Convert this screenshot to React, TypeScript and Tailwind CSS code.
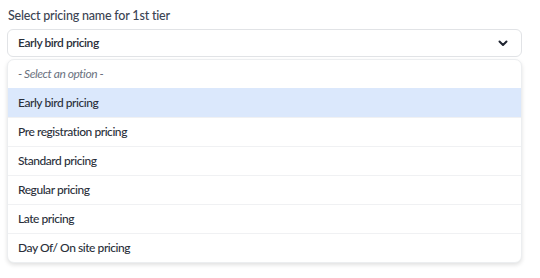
import React from 'react';

const options = [
  'Early bird pricing',
  'Pre registration pricing',
  'Standard pricing',
  'Regular pricing',
  'Late pricing',
  'Day Of/ On site pricing',
];

export default function App() {
  const selected = 'Early bird pricing';

  return (
    <div className="w-[540px] h-[278px] bg-white font-['Lato',sans-serif] text-[12px] font-medium tracking-[-0.45px] text-[#2a2f3a]">
      <div className="pl-[7px] pr-[18px] pt-[7px]">
        {/* Label */}
        <label className="block pl-px text-[12.5px] tracking-[-0.2px] font-medium text-[#3b4453] leading-[18px]">
          Select pricing name for 1st tier
        </label>

        {/* Select box */}
        <div className="mt-[4px] h-[28px] flex items-center justify-between rounded-[6px] border border-[#e1e3e6] bg-white pl-[10px] pr-[13px]">
          <span className="font-semibold text-[#2a2f3a]">{selected}</span>
          <svg width="10" height="7" viewBox="0 0 10 7" fill="none">
            <path d="M1.5 1.5 5 5 8.5 1.5" stroke="#1f2430" strokeWidth="2" strokeLinecap="round" strokeLinejoin="round" />
          </svg>
        </div>

        {/* Dropdown list */}
        <div className="mt-[2px] rounded-[7px] border border-[#eceef0] bg-white shadow-[0_2px_4px_rgba(0,0,0,0.12)] overflow-hidden">
          <div className="h-[28px] flex items-center pl-[10px] italic font-normal text-[#6b7280]">- Select an option -</div>
          {options.map((o) => (
            <div
              key={o}
              className={
                o === selected
                  ? 'h-[29px] flex items-center pl-[10px] bg-[#dbe8fc]'
                  : 'h-[29px] flex items-center pl-[10px] border-t border-[#f0f1f3]'
              }
            >
              {o}
            </div>
          ))}
        </div>
      </div>
    </div>
  );
}
